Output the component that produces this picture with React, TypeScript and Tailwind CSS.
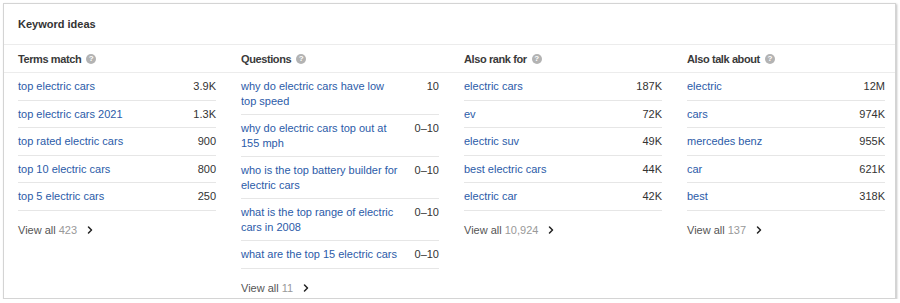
import { ChevronRight } from "lucide-react";

type Row = { term: string; value: string };

type Group = {
  title: string;
  rows: Row[];
  total: string;
};

const GROUPS: Group[] = [
  {
    title: "Terms match",
    total: "423",
    rows: [
      { term: "top electric cars", value: "3.9K" },
      { term: "top electric cars 2021", value: "1.3K" },
      { term: "top rated electric cars", value: "900" },
      { term: "top 10 electric cars", value: "800" },
      { term: "top 5 electric cars", value: "250" },
    ],
  },
  {
    title: "Questions",
    total: "11",
    rows: [
      { term: "why do electric cars have low top speed", value: "10" },
      { term: "why do electric cars top out at 155 mph", value: "0–10" },
      { term: "who is the top battery builder for electric cars", value: "0–10" },
      { term: "what is the top range of electric cars in 2008", value: "0–10" },
      { term: "what are the top 15 electric cars", value: "0–10" },
    ],
  },
  {
    title: "Also rank for",
    total: "10,924",
    rows: [
      { term: "electric cars", value: "187K" },
      { term: "ev", value: "72K" },
      { term: "electric suv", value: "49K" },
      { term: "best electric cars", value: "44K" },
      { term: "electric car", value: "42K" },
    ],
  },
  {
    title: "Also talk about",
    total: "137",
    rows: [
      { term: "electric", value: "12M" },
      { term: "cars", value: "974K" },
      { term: "mercedes benz", value: "955K" },
      { term: "car", value: "621K" },
      { term: "best", value: "318K" },
    ],
  },
];

function HelpIcon() {
  return (
    <span className="ml-[5px] inline-flex h-[10px] w-[10px] items-center justify-center rounded-full bg-[#b3b3b3] text-[8px] font-bold leading-none tracking-normal text-white">
      ?
    </span>
  );
}

function KeywordList({ group }: { group: Group }) {
  return (
    <div>
      {group.rows.map((row) => (
        <div
          key={row.term}
          className="flex items-start justify-between gap-3 border-b border-[#e6e6e6] py-[6px] leading-[14.5px]"
        >
          <a href="#" className="max-w-[159px] text-[#2b5ba8]">
            {row.term}
          </a>
          <span className="shrink-0 text-[#333]">{row.value}</span>
        </div>
      ))}
      <a href="#" className="flex items-center pt-[12px] leading-[14px] text-[#555]">
        View all<span className="ml-[3px] text-[#999]">{group.total}</span>
        <ChevronRight className="ml-[7px] h-[12px] w-[12px] text-[#222]" strokeWidth={3} />
      </a>
    </div>
  );
}

export default function App() {
  return (
    <div className="bg-white pl-[3px] pt-[3px] font-['Liberation_Sans',Arial,sans-serif] text-[11px]">
      <section className="w-[893px] border border-[#d4d4d4] bg-white pb-[3px] shadow-[1px_1px_2px_rgba(0,0,0,0.25)]">
        <header className="border-b border-[#ececec] px-[14px] py-[13px] leading-[14px]">
          <h2 className="font-bold text-[#333]">Keyword ideas</h2>
        </header>
        <div className="grid grid-cols-[repeat(4,198px)] gap-x-[25px] border-b border-[#ececec] px-[14px] py-[6.5px] leading-[14px]">
          {GROUPS.map((group) => (
            <h3
              key={group.title}
              className="flex items-center font-bold tracking-[-0.4px] text-[#3a3a3a]"
            >
              {group.title}
              <HelpIcon />
            </h3>
          ))}
        </div>
        <div className="grid grid-cols-[repeat(4,198px)] items-start gap-x-[25px] px-[14px]">
          {GROUPS.map((group) => (
            <KeywordList key={group.title} group={group} />
          ))}
        </div>
      </section>
    </div>
  );
}
